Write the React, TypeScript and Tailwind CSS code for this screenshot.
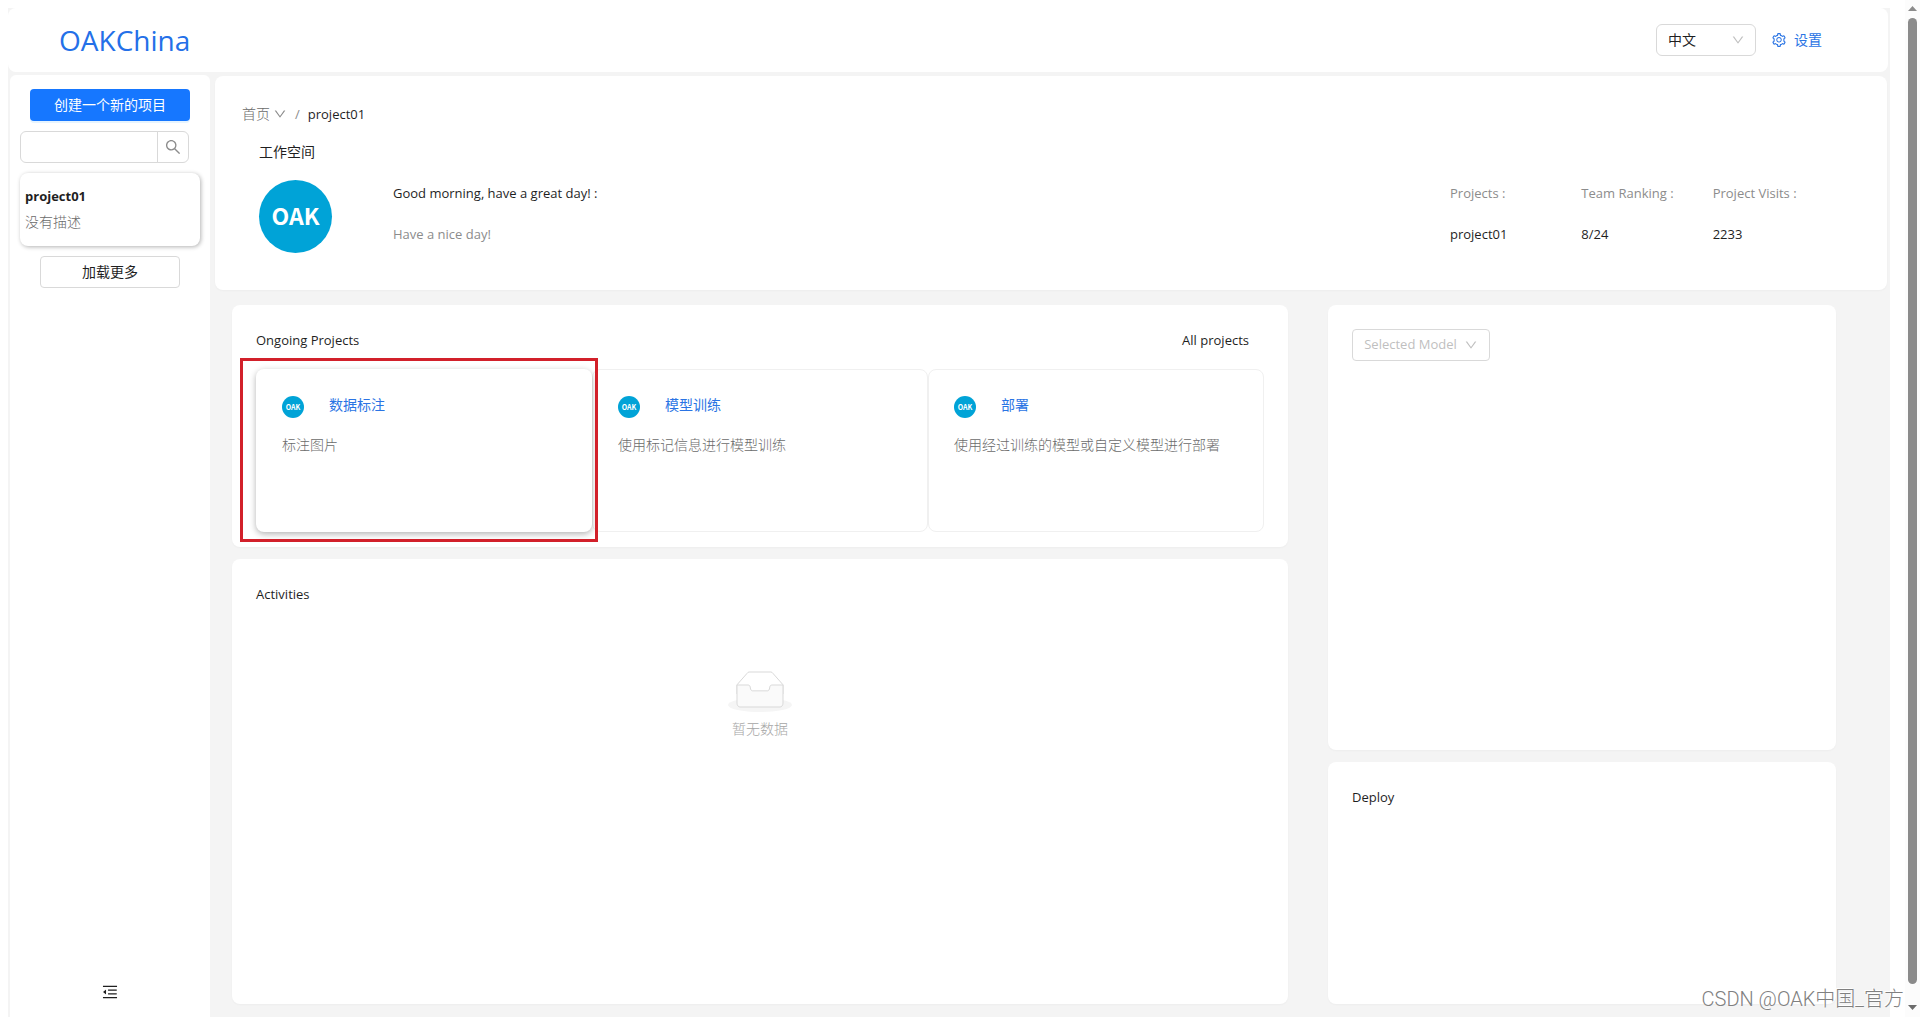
import type { ReactNode } from "react";
import {
  AiOutlineDown,
  AiOutlineMenuFold,
  AiOutlineSearch,
  AiOutlineSetting,
} from "react-icons/ai";

const steps = [
  { title: "数据标注", text: "标注图片", active: true },
  { title: "模型训练", text: "使用标记信息进行模型训练", active: false },
  { title: "部署", text: "使用经过训练的模型或自定义模型进行部署", active: false },
];

const stats = [
  { label: "Projects", value: "project01" },
  { label: "Team Ranking", value: "8/24" },
  { label: "Project Visits", value: "2233" },
];

function Panel({ className, children }: { className: string; children?: ReactNode }) {
  return (
    <section className={`rounded-lg bg-white shadow-[0_1px_2px_rgba(0,0,0,0.03)] ${className}`}>
      {children}
    </section>
  );
}

function EmptyIcon() {
  return (
    <svg width="64" height="41" viewBox="0 0 64 41" aria-hidden="true">
      <g transform="translate(0 1)" fill="none" fillRule="evenodd">
        <ellipse fill="#f5f5f5" cx="32" cy="33" rx="32" ry="7" />
        <g fillRule="nonzero" stroke="#d9d9d9">
          <path d="M55 12.76L44.854 1.258C44.367.474 43.656 0 42.907 0H21.093c-.749 0-1.46.474-1.947 1.257L9 12.761V22h46v-9.24z" />
          <path
            fill="#fafafa"
            d="M41.613 15.931c0-1.605.994-2.93 2.227-2.931H55v18.137C55 33.26 53.68 35 52.05 35h-40.1C10.32 35 9 33.259 9 31.137V13h11.16c1.233 0 2.227 1.323 2.227 2.928v.022c0 1.605 1.005 2.901 2.237 2.901h14.752c1.232 0 2.237-1.308 2.237-2.913v-.007z"
          />
        </g>
      </g>
    </svg>
  );
}

function Header() {
  return (
    <header className="flex h-16 items-center rounded-lg bg-white pr-[66px] pl-[51px]">
      <h1 className="text-[28px] leading-10 text-[#2470e8]">OAKChina</h1>
      <div className="ml-auto flex items-center gap-[15px]">
        <div className="relative">
          <select
            aria-label="语言"
            className="h-8 w-[100px] appearance-none rounded-md border border-[#d9d9d9] bg-white px-[11px] text-sm"
          >
            <option>中文</option>
          </select>
          <AiOutlineDown className="pointer-events-none absolute top-[9px] right-[11px] size-3.5 text-[#bfbfbf]" />
        </div>
        <a
          href="#settings"
          className="flex items-center gap-[7px] text-sm leading-5 text-[#2a74e4]"
        >
          <AiOutlineSetting className="size-4" />
          设置
        </a>
      </div>
    </header>
  );
}

function Sidebar() {
  return (
    <aside className="flex w-[200px] shrink-0 flex-col rounded-t-md bg-white pt-[14px] pb-4">
      <button
        type="button"
        className="mx-5 h-8 rounded bg-[#1677ff] text-sm text-white shadow-[0_2px_0_rgba(5,145,255,0.1)]"
      >
        创建一个新的项目
      </button>
      <form className="mt-[10px] mr-[21px] ml-[10px] flex h-8">
        <input
          type="search"
          aria-label="搜索项目"
          className="min-w-0 flex-1 rounded-l-md border border-[#d9d9d9] px-2 text-sm outline-none"
        />
        <button
          type="button"
          aria-label="搜索"
          className="-ml-px flex w-8 items-center justify-center rounded-r-md border border-[#d9d9d9] text-[#8c8c8c]"
        >
          <AiOutlineSearch className="size-[18px]" />
        </button>
      </form>
      <a
        href="#project01"
        className="mt-[10px] ml-[10px] flex h-[73px] w-[180px] flex-col gap-1 rounded-lg px-[5px] pt-[11px] shadow-[1px_1px_4px_rgba(0,0,0,0.3)]"
      >
        <span className="leading-6 font-bold">project01</span>
        <span className="text-sm leading-5 font-light text-[#6b6b6b]">没有描述</span>
      </a>
      <button
        type="button"
        className="mx-[30px] mt-[10px] h-8 rounded border border-[#d9d9d9] text-sm"
      >
        加载更多
      </button>
      <button type="button" aria-label="收起菜单" className="mx-auto mt-auto">
        <AiOutlineMenuFold className="size-[18px]" />
      </button>
    </aside>
  );
}

function WorkspaceHeader() {
  return (
    <Panel className="mr-px h-[214px] px-[27px] pt-[27px]">
      <nav aria-label="Breadcrumb" className="flex items-center leading-[22px]">
        <a
          href="#home"
          className="flex items-center gap-[3px] text-sm leading-[22px] font-light text-[#6b6b6b]"
        >
          首页
          <AiOutlineDown className="size-3.5 text-[#8c8c8c]" />
        </a>
        <span className="mx-2 text-[#8c8c8c]">/</span>
        <span>project01</span>
      </nav>
      <div className="pr-4 pl-[17px]">
        <h2 className="mt-4 text-sm leading-[22px]">工作空间</h2>
        <div className="mt-[17px] flex">
          <div className="flex size-[73px] items-center justify-center rounded-full bg-[#00a3d7] pb-[3px] font-['Noto_Sans_CJK_SC',sans-serif] text-[23px] leading-[30px] font-bold text-white">
            OAK
          </div>
          <div className="ml-[61px] flex flex-1 flex-col gap-[19px] pt-0.5 leading-[22px]">
            <p>Good morning, have a great day! :</p>
            <p className="text-[#8c8c8c]">Have a nice day!</p>
          </div>
          <dl className="grid w-[394px] grid-cols-3 pt-0.5 leading-[22px]">
            {stats.map((s) => (
              <div key={s.label} className="flex flex-col gap-[19px]">
                <dt className="text-[#8c8c8c]">{s.label} :</dt>
                <dd>{s.value}</dd>
              </div>
            ))}
          </dl>
        </div>
      </div>
    </Panel>
  );
}

function OngoingProjects() {
  return (
    <Panel className="h-[242px] px-6 pt-6">
      <div className="flex justify-between pr-[15px] leading-[22px]">
        <h2>Ongoing Projects</h2>
        <a href="#all">All projects</a>
      </div>
      <div className="relative mt-[18px] grid grid-cols-3">
        {steps.map((s) => (
          <article
            key={s.title}
            className={
              s.active
                ? "z-10 h-[163px] rounded-lg bg-white px-[26px] pt-6 shadow-[0_2px_6px_rgba(0,0,0,0.3)]"
                : "h-[163px] rounded-lg border border-[#f0f0f0] px-[25px] pt-[23px]"
            }
          >
            <div className="flex items-end gap-[25px]">
              <div className="mb-px flex size-[22px] items-center justify-center rounded-full bg-[#00a3d7] font-['Noto_Sans_CJK_SC',sans-serif] text-[7px] font-bold text-white">
                OAK
              </div>
              <a href="#step" className="pb-0.5 text-sm leading-6 text-[#2a74e4]">
                {s.title}
              </a>
            </div>
            <p className="mt-[15px] text-sm leading-[22px] font-light text-[#6b6b6b]">{s.text}</p>
          </article>
        ))}
        <div className="pointer-events-none absolute -top-[11px] -left-4 z-20 h-[184px] w-[calc(33.333%+22px)] border-3 border-[#d2202a]" />
      </div>
    </Panel>
  );
}

function ScrollRail() {
  return (
    <div aria-hidden="true" className="flex w-[15px] shrink-0 flex-col items-center bg-[#fcfcfc]">
      <svg className="mt-[6px]" width="9" height="5" viewBox="0 0 9 5">
        <path d="M0 5L4.500 0L9 5Z" fill="#8b8b8b" />
      </svg>
      <div className="mt-[7px] w-[9px] flex-1 rounded-full bg-[#8b8b8b]" />
      <svg className="mt-[21px] mb-[7px]" width="9" height="5" viewBox="0 0 9 5">
        <path d="M0 0L4.500 5L9 0Z" fill="#6b6b6b" />
      </svg>
    </div>
  );
}

export default function App() {
  return (
    <div className="relative flex min-h-screen bg-white font-['Open_Sans','Noto_Sans_CJK_SC',sans-serif] text-[13px] text-[#1f1f1f]">
      <div className="mt-2 mr-[15px] ml-2 flex min-w-0 flex-1 flex-col bg-[#f4f4f4] pr-0.5">
        <Header />
        <div className="mt-[3px] flex flex-1 pl-0.5">
          <Sidebar />
          <main className="ml-[5px] flex min-w-0 flex-1 flex-col pt-px pb-[13px]">
            <WorkspaceHeader />
            <div className="mt-[15px] mr-[52px] ml-[17px] flex flex-1 gap-10">
              <div className="flex min-w-0 flex-[1056] flex-col gap-3">
                <OngoingProjects />
                <Panel className="flex-1 px-6 pt-6">
                  <h2 className="leading-[22px]">Activities</h2>
                  <div className="mt-[66px] flex flex-col items-center gap-[6px] text-sm leading-[22px] font-light text-[#a6a6a6]">
                    <EmptyIcon />
                    <p>暂无数据</p>
                  </div>
                </Panel>
              </div>
              <div className="flex min-w-0 flex-[508] flex-col gap-3">
                <Panel className="h-[445px] p-6">
                  <button
                    type="button"
                    className="flex h-8 w-[138px] items-center justify-center gap-[7px] rounded border border-[#d9d9d9] text-[#bfbfbf]"
                  >
                    Selected Model
                    <AiOutlineDown className="size-3.5" />
                  </button>
                </Panel>
                <Panel className="flex-1 px-6 pt-6">
                  <h2 className="leading-[22px]">Deploy</h2>
                </Panel>
              </div>
            </div>
          </main>
        </div>
      </div>
      <ScrollRail />
      <div className="absolute right-4 bottom-[3px] font-['Roboto','Noto_Sans_CJK_SC',sans-serif] text-xl leading-[30px] font-light text-[#808080] [text-shadow:-1px_-1px_0_#ffffff]">
        CSDN @OAK中国_官方
      </div>
    </div>
  );
}
